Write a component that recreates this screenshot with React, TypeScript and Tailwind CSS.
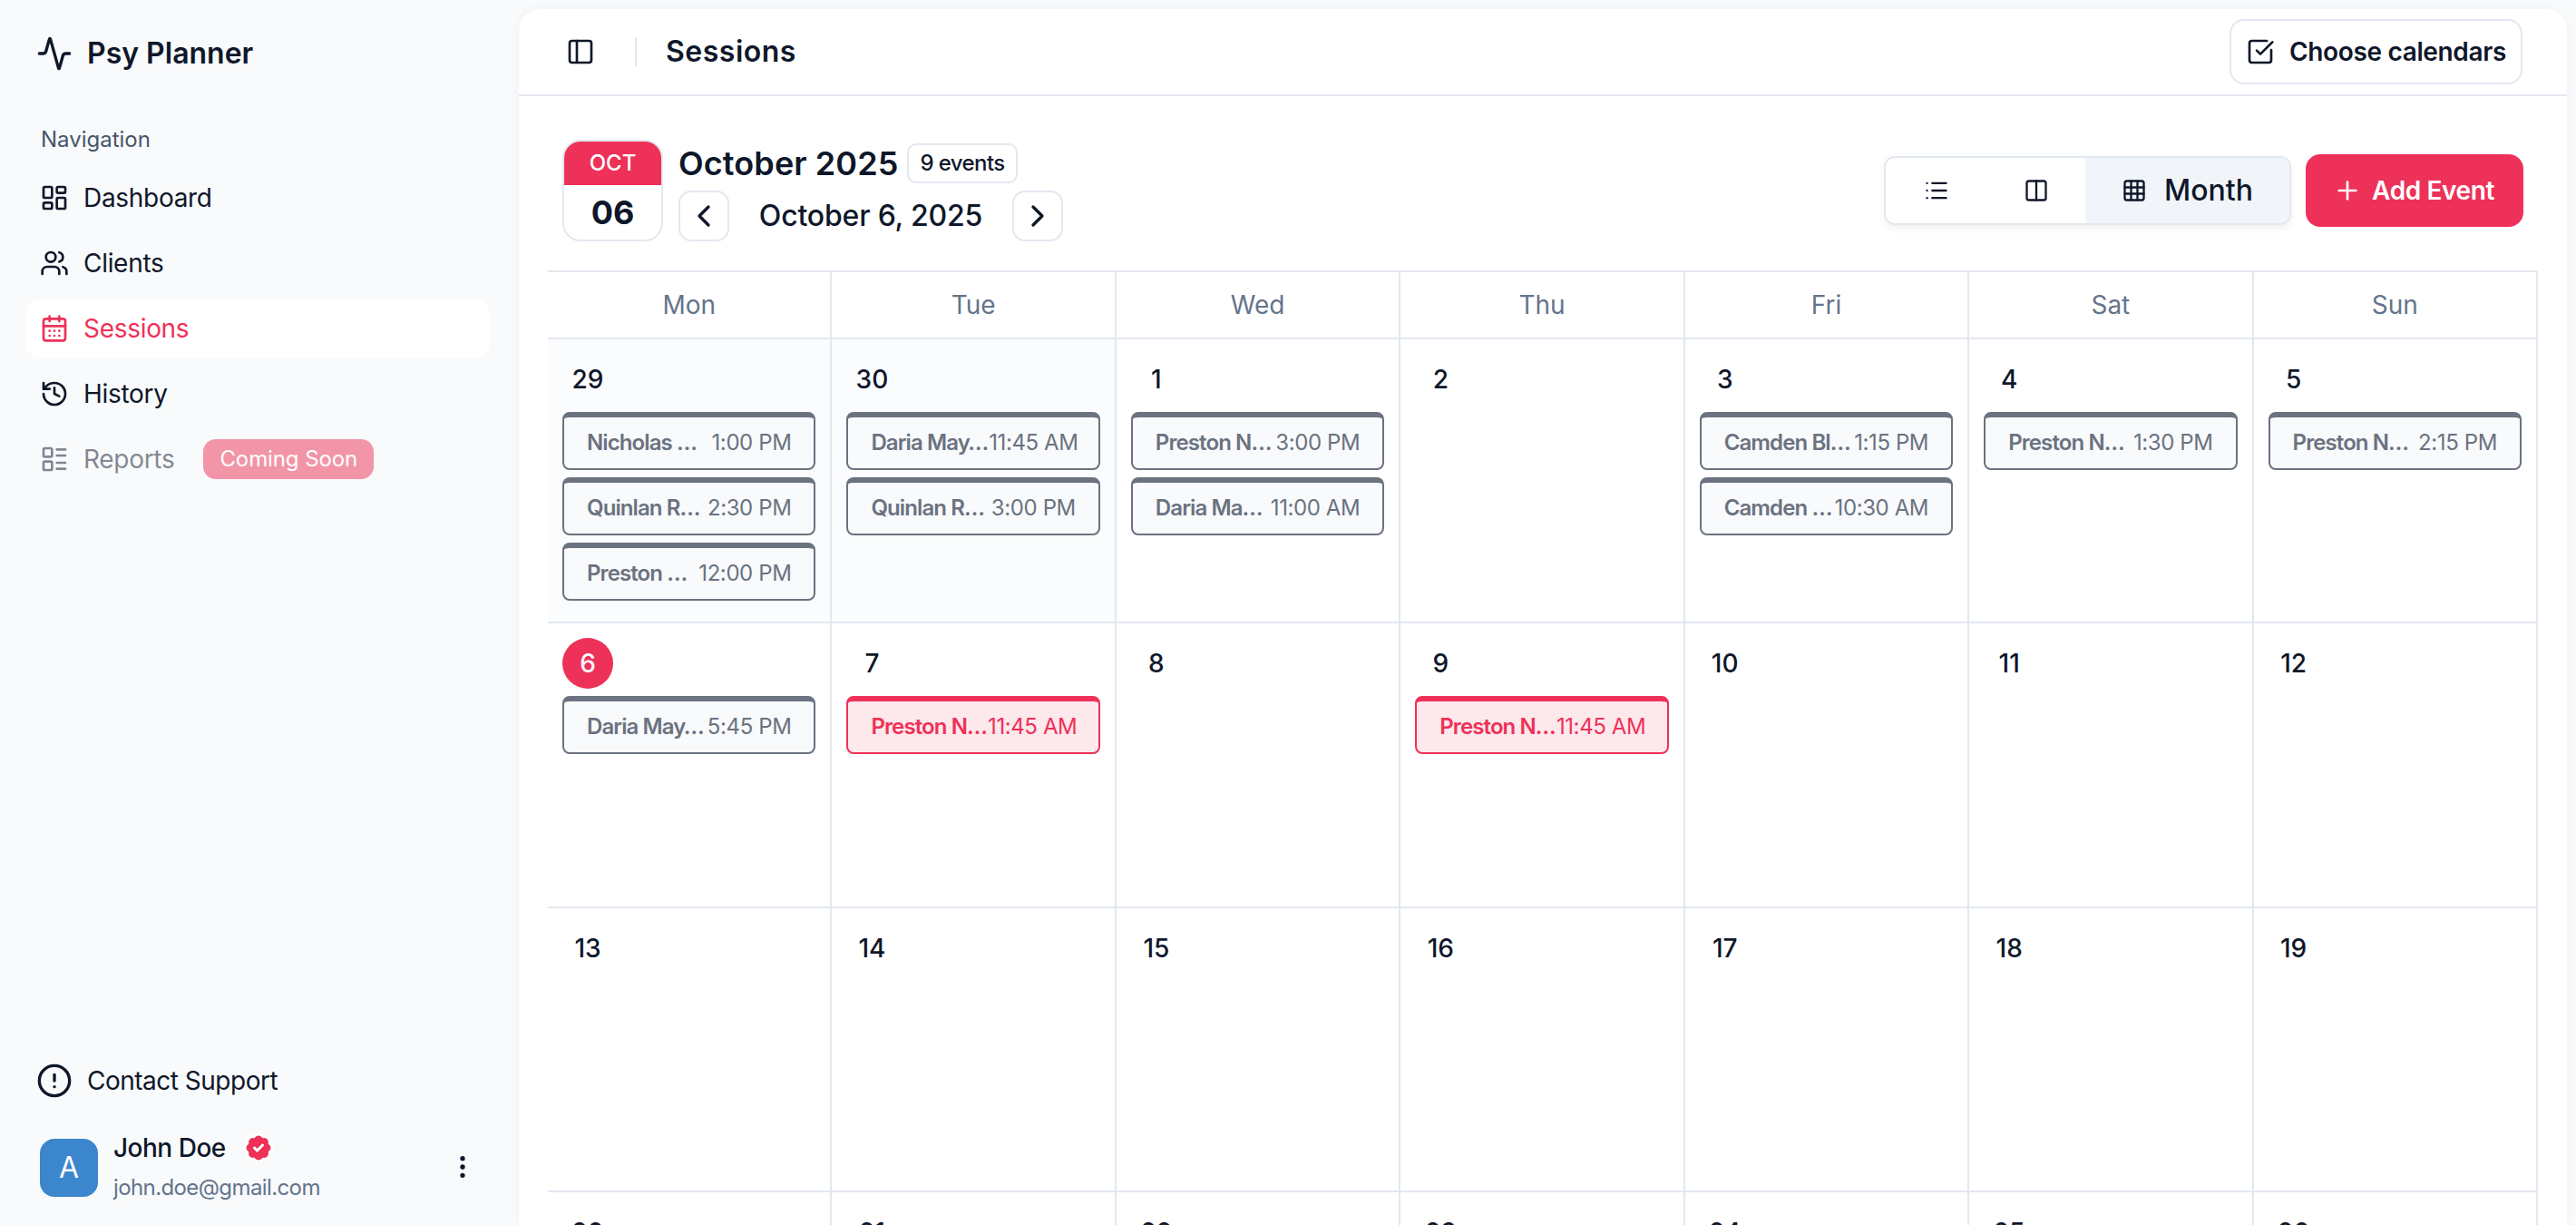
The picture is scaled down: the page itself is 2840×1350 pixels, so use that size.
import React from "react";
import {
  Activity, LayoutDashboard, Users, CalendarDays, History, LayoutList, CircleAlert, BadgeCheck,
  EllipsisVertical, PanelLeft, SquareCheckBig, ChevronLeft, ChevronRight, List, Columns2, Grid3x3, Plus,
} from "lucide-react";

type Ev = { name: string; time: string; active?: boolean };
type Cell = { day: number; muted?: boolean; today?: boolean; events?: Ev[] };

const weeks: Cell[][] = [
  [
    { day: 29, muted: true, events: [{ name: "Nicholas …", time: "1:00 PM" }, { name: "Quinlan R…", time: "2:30 PM" }, { name: "Preston …", time: "12:00 PM" }] },
    { day: 30, muted: true, events: [{ name: "Daria May…", time: "11:45 AM" }, { name: "Quinlan R…", time: "3:00 PM" }] },
    { day: 1, events: [{ name: "Preston N…", time: "3:00 PM" }, { name: "Daria Ma…", time: "11:00 AM" }] },
    { day: 2 },
    { day: 3, events: [{ name: "Camden Bl…", time: "1:15 PM" }, { name: "Camden …", time: "10:30 AM" }] },
    { day: 4, events: [{ name: "Preston N…", time: "1:30 PM" }] },
    { day: 5, events: [{ name: "Preston N…", time: "2:15 PM" }] },
  ],
  [
    { day: 6, today: true, events: [{ name: "Daria May…", time: "5:45 PM" }] },
    { day: 7, events: [{ name: "Preston N…", time: "11:45 AM", active: true }] },
    { day: 8 },
    { day: 9, events: [{ name: "Preston N…", time: "11:45 AM", active: true }] },
    { day: 10 }, { day: 11 }, { day: 12 },
  ],
  [13, 14, 15, 16, 17, 18, 19].map((day) => ({ day })),
  [20, 21, 22, 23, 24, 25, 26].map((day) => ({ day })),
];

const days = ["Mon", "Tue", "Wed", "Thu", "Fri", "Sat", "Sun"];

function NavItem({ icon: Icon, label, active, dim, badge }: { icon: React.ElementType; label: string; active?: boolean; dim?: boolean; badge?: boolean }) {
  return (
    <div className={`flex h-[64px] items-center gap-[16px] rounded-[16px] px-[16px] text-[28px] tracking-[-0.3px] ${active ? "bg-white text-[#ee3158]" : "text-[#0f172a]"}`}>
      <Icon size={32} className={`shrink-0 ${dim ? "opacity-50" : ""}`} />
      <span className={dim ? "opacity-50" : ""}>{label}</span>
      {badge && (
        <span className="ml-[16px] flex h-[44px] items-center rounded-[14px] bg-[#f295a8] px-[18px] text-[24px] tracking-[-0.1px] text-white">Coming Soon</span>
      )}
    </div>
  );
}

function EventChip({ name, time, active }: Ev) {
  return (
    <div className={`flex h-[64px] items-center justify-between gap-[1px] rounded-[8px] border-2 border-t-[6px] px-[25px] text-[24px] ${active ? "border-[#ee3158] bg-[#fde8ec] text-[#ee3158]" : "border-[#6b7280] bg-[#f8fafc] text-[#6b7280]"}`}>
      <span className="whitespace-nowrap font-semibold tracking-[-0.9px]">{name}</span>
      <span className="shrink-0 whitespace-nowrap tracking-[-0.4px]">{time}</span>
    </div>
  );
}

function DayCell({ day, muted, today, events }: Cell) {
  return (
    <div className={`flex aspect-square flex-col gap-[8px] border-r-2 border-b-2 border-[#e2e8f0] p-[16px] ${muted ? "bg-[#fbfcfe]" : "bg-white"}`}>
      <div className={`flex h-[56px] w-[56px] items-center justify-center rounded-full text-[28px] font-medium ${today ? "bg-[#ee3158] text-white" : "text-[#0f172a]"}`}>{day}</div>
      {events?.map((e) => <EventChip key={e.name + e.time} {...e} />)}
    </div>
  );
}

export default function App() {
  return (
    <div className="flex h-[1350px] w-[2840px] overflow-hidden bg-[#f8fafc] font-['Inter',sans-serif] text-[#0f172a]">
      <aside className="flex w-[572px] shrink-0 flex-col">
        <div className="flex items-center gap-[16px] px-[40px] pt-[35px]">
          <Activity size={40} />
          <span className="text-[32px] font-semibold">Psy Planner</span>
        </div>
        <div className="mt-[53px] px-[45px] text-[24px] leading-[36px] text-[#475569]">Navigation</div>
        <nav className="mt-[14px] mr-[32px] ml-[28px] flex flex-col gap-[8px]">
          <NavItem icon={LayoutDashboard} label="Dashboard" />
          <NavItem icon={Users} label="Clients" />
          <NavItem icon={CalendarDays} label="Sessions" active />
          <NavItem icon={History} label="History" />
          <NavItem icon={LayoutList} label="Reports" dim badge />
        </nav>
        <div className="mt-auto flex items-center gap-[16px] px-[40px] text-[28px] tracking-[-0.5px]">
          <CircleAlert size={40} />
          <span>Contact Support</span>
        </div>
        <div className="mt-[35px] mb-[25px] flex items-center pr-[46px] pl-[44px]">
          <div className="mt-[2px] flex h-[64px] w-[64px] items-center justify-center rounded-[16px] bg-[#3b86cc] text-[32px] text-white">A</div>
          <div className="ml-[17px] flex flex-1 flex-col">
            <div className="flex items-center gap-[18px] text-[28px] leading-[36px] font-medium tracking-[-0.5px]">
              John Doe
              <BadgeCheck size={36} className="fill-[#ee3158] text-white" />
            </div>
            <div className="mt-[10px] text-[24px] leading-[32px] tracking-[-0.6px] text-[#64748b]">john.doe@gmail.com</div>
          </div>
          <EllipsisVertical size={32} />
        </div>
      </aside>

      <main className="mt-[10px] mr-[10px] flex-1 overflow-hidden rounded-t-[24px] bg-white shadow-[0_0_12px_rgba(15,23,42,0.04)]">
        <header className="flex h-[96px] items-center border-b-2 border-[#e2e8f0] pr-[49px] pl-[52px]">
          <PanelLeft size={32} />
          <div className="mr-[32px] ml-[44px] h-[32px] w-[2px] bg-[#e2e8f0]" />
          <h1 className="text-[32px] font-semibold tracking-[0.5px]">Sessions</h1>
          <button className="ml-auto flex h-[72px] items-center gap-[16px] rounded-[16px] border-2 border-[#e2e8f0] bg-white px-[16px] text-[28px] font-semibold tracking-[-0.35px]">
            <SquareCheckBig size={32} />
            Choose calendars
          </button>
        </header>

        <section className="px-[32px] pt-[48px]">
          <div className="flex h-[112px] items-center justify-between px-[16px]">
            <div className="flex gap-[17px]">
              <div className="flex h-[112px] w-[111px] flex-col overflow-hidden rounded-[20px] border-2 border-[#e2e8f0]">
                <div className="flex h-[48px] items-center justify-center bg-[#ee3158] text-[24px] font-medium text-white">OCT</div>
                <div className="flex flex-1 items-center justify-center text-[36px] font-bold">06</div>
              </div>
              <div className="flex flex-col gap-[4px]">
                <div className="flex h-[52px] items-center gap-[10px]">
                  <span className="text-[36px] font-semibold tracking-[0.1px]">October 2025</span>
                  <span className="flex h-[44px] items-center rounded-[10px] border-2 border-[#e2e8f0] px-[12px] text-[24px] font-medium tracking-[-0.6px]">9 events</span>
                </div>
                <div className="flex h-[56px] items-center">
                  <button className="flex h-[56px] w-[56px] items-center justify-center rounded-[14px] border-2 border-[#e2e8f0]"><ChevronLeft size={40} /></button>
                  <span className="w-[312px] text-center text-[32px] font-medium tracking-[-0.2px]">October 6, 2025</span>
                  <button className="flex h-[56px] w-[56px] items-center justify-center rounded-[14px] border-2 border-[#e2e8f0]"><ChevronRight size={40} /></button>
                </div>
              </div>
            </div>
            <div className="flex items-center gap-[16px]">
              <div className="flex h-[76px] overflow-hidden rounded-[12px] border-2 border-[#e2e8f0] shadow-[0_4px_10px_rgba(15,23,42,0.06)]">
                <button className="flex w-[110px] items-center justify-center pl-[2px]"><List size={28} /></button>
                <button className="flex w-[110px] items-center justify-center pl-[2px]"><Columns2 size={28} /></button>
                <button className="flex w-[225px] items-center justify-center gap-[19px] bg-[#f1f5f9] text-[32px] font-medium"><Grid3x3 size={28} />Month</button>
              </div>
              <button className="flex h-[80px] w-[240px] items-center justify-center gap-[11px] rounded-[16px] bg-[#ee3158] pr-[2px] text-[28px] font-semibold tracking-[-0.4px] text-white"><Plus size={32} />Add Event</button>
            </div>
          </div>

          <div className="mt-[32px] border-t-2 border-[#e2e8f0]">
            <div className="grid grid-cols-7">
              {days.map((d) => (
                <div key={d} className="flex h-[74px] items-center justify-center border-r-2 border-b-2 border-[#e2e8f0] text-[28px] text-[#64748b] last:border-r-0">{d}</div>
              ))}
              {weeks.flat().map((c) => <DayCell key={c.day + (c.muted ? "m" : "")} {...c} />)}
            </div>
          </div>
        </section>
      </main>
    </div>
  );
}
